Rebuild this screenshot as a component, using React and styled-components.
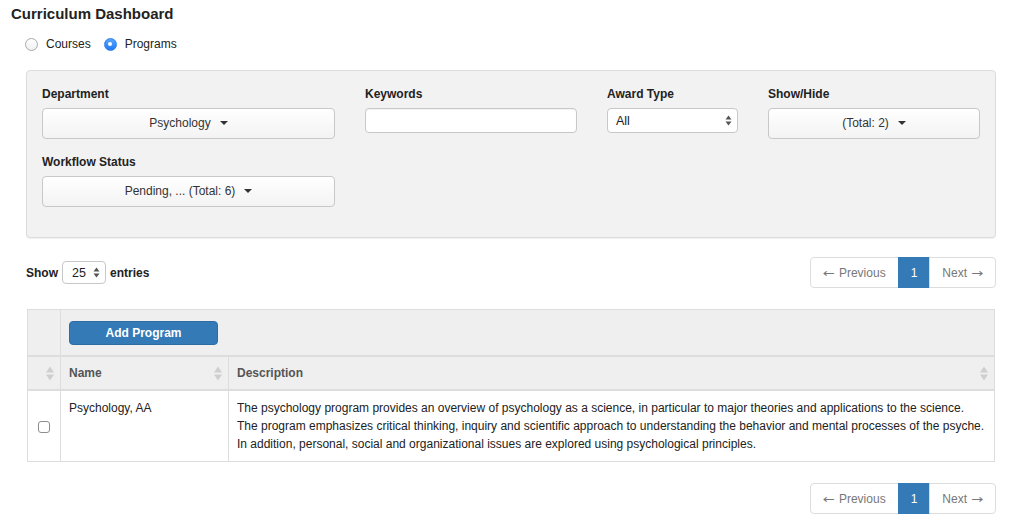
import React from "react";
import styled, { createGlobalStyle } from "styled-components";

const GlobalStyle = createGlobalStyle`
  body {
    margin: 0;
    background: #fff;
    font-family: "Liberation Sans", Arial, Helvetica, sans-serif;
    font-size: 12px;
    line-height: 18px;
    color: #333;
  }
  * { box-sizing: border-box; }
`;

const Page = styled.div`
  padding: 5px 20px 10px 26px;
`;

const Title = styled.h1`
  margin: 0 0 0 -15px;
  font-size: 15px;
  line-height: 18px;
  font-weight: bold;
  color: #222;
`;

//radio buttons for courses / programs
const RadioRow = styled.div`
  display: flex;
  align-items: center;
  margin: 12px 0 0 -1px;
  height: 18px;
`;

const RadioOption = styled.label`
  display: flex;
  align-items: center;
  gap: 8px;
  margin-right: 13px;
  color: #222;
`;

const RadioDot = styled.span`
  width: 13px;
  height: 13px;
  border-radius: 50%;
  display: flex;
  align-items: center;
  justify-content: center;
  border: 1px solid ${(p) => (p.checked ? "#2f7ff0" : "#a9a9a9")};
  background: ${(p) =>
    p.checked ? "linear-gradient(#58a6ff, #1f7af5)" : "linear-gradient(#fff, #f0f0f0)"};
  &::after {
    content: "";
    display: ${(p) => (p.checked ? "block" : "none")};
    width: 4px;
    height: 4px;
    border-radius: 50%;
    background: #fff;
  }
`;

//filters
const FilterPanel = styled.div`
  margin-top: 17px;
  background: #f2f2f2;
  border: 1px solid #dcdcdc;
  border-radius: 4px;
  box-shadow: 0 1px 1px rgba(0, 0, 0, 0.06);
  padding: 14px 15px 30px;
  display: grid;
  grid-template-columns: 293px 212px 131px 212px;
  column-gap: 30px;
  row-gap: 14px;
  align-items: start;
`;

const Field = styled.div`
  display: flex;
  flex-direction: column;
`;

const FieldLabel = styled.label`
  font-weight: bold;
  color: #222;
  margin-bottom: 5px;
`;

const DropButton = styled.button`
  height: 31px;
  width: 100%;
  border: 1px solid #c8c8c8;
  border-radius: 4px;
  background: linear-gradient(#ffffff, #f3f3f3);
  font: inherit;
  color: #333;
  display: flex;
  align-items: center;
  justify-content: center;
  gap: 9px;
  padding: 0 12px 1px;
`;

const Caret = styled.span`
  width: 0;
  height: 0;
  border-top: 4px solid #333;
  border-left: 4px solid transparent;
  border-right: 4px solid transparent;
`;

const TextInput = styled.input`
  height: 25px;
  width: 100%;
  border: 1px solid #c8c8c8;
  border-radius: 4px;
  background: #fff;
  font: inherit;
  padding: 0 8px;
  box-shadow: inset 0 1px 1px rgba(0, 0, 0, 0.05);
`;

const SelectBox = styled.div`
  height: ${(p) => p.h || 25}px;
  width: ${(p) => (p.w ? `${p.w}px` : "100%")};
  border: 1px solid #c8c8c8;
  border-radius: 4px;
  background: #fff;
  display: flex;
  align-items: center;
  padding: 0 5px 0 ${(p) => p.pl || 8}px;
  color: #222;
  font-size: 12.5px;
  font-weight: normal;
`;

const SelectArrows = styled.svg`
  margin-left: auto;
  flex: none;
`;

function Arrows() {
  return (
    <SelectArrows width="7" height="11" viewBox="0 0 7 11">
      <path d="M0.5 4.5 L3.5 0.5 L6.5 4.5 Z" fill="#555" />
      <path d="M0.5 6.5 L6.5 6.5 L3.5 10.5 Z" fill="#555" />
    </SelectArrows>
  );
}

//show entries + pagination
const ControlRow = styled.div`
  display: flex;
  align-items: center;
  justify-content: space-between;
  margin-top: 19px;
  height: 31px;
`;

const ShowEntries = styled.div`
  display: flex;
  align-items: center;
  gap: 4px;
  font-weight: bold;
  color: #222;
`;

const Pager = styled.ul`
  display: flex;
  list-style: none;
  margin: 0;
  padding: 0;
`;

const PageItem = styled.li`
  height: 31px;
  display: flex;
  align-items: center;
  gap: 4px;
  padding: 0 12px;
  border: 1px solid ${(p) => (p.active ? "#337ab7" : "#ddd")};
  margin-left: -1px;
  background: ${(p) => (p.active ? "#337ab7" : "#fff")};
  color: ${(p) => (p.active ? "#fff" : "#777")};
  &:first-child {
    margin-left: 0;
    border-radius: 4px 0 0 4px;
  }
  &:last-child {
    border-radius: 0 4px 4px 0;
  }
`;

const Arrow = styled.span`
  display: inline-block;
  width: 12px;
  text-align: center;
  font-family: "DejaVu Sans", sans-serif;
  font-size: 12px;
  transform: scaleX(1.2);
`;

function Pagination() {
  return (
    <Pager>
      <PageItem>
        <Arrow>←</Arrow>Previous
      </PageItem>
      <PageItem active>1</PageItem>
      <PageItem>
        Next<Arrow>→</Arrow>
      </PageItem>
    </Pager>
  );
}

const BottomPager = styled.div`
  display: flex;
  justify-content: flex-end;
  margin-top: 21px;
`;

//table
const Table = styled.table`
  margin: 21px 1px 0;
  width: calc(100% - 2px);
  border-collapse: collapse;
  border: 1px solid #ddd;
`;

const Col = styled.col`
  width: ${(p) => (p.w ? `${p.w}px` : "auto")};
`;

const ToolCell = styled.th`
  background: #efefef;
  border: 1px solid #ddd;
  border-bottom: 2px solid #ddd;
  padding: 11px 8px 10px;
  text-align: left;
`;

const AddButton = styled.button`
  width: 149px;
  height: 24px;
  background: #337ab7;
  border: 1px solid #2e6da4;
  border-radius: 4px;
  color: #fff;
  font: inherit;
  padding: 0;
`;

const HeadCell = styled.th`
  background: #efefef;
  border: 1px solid #ddd;
  border-bottom: 2px solid #ddd;
  padding: 7px 6px 7px 8px;
  text-align: left;
  font-weight: bold;
  color: #555;
`;

const HeadInner = styled.div`
  display: flex;
  align-items: center;
  justify-content: space-between;
  height: 18px;
`;

function SortIcon() {
  return (
    <svg width="8" height="15" viewBox="0 0 8 15">
      <path d="M0 6.5 L4 0.5 L8 6.5 Z" fill="#cfcfcf" />
      <path d="M0 8.5 L8 8.5 L4 14.5 Z" fill="#cfcfcf" />
    </svg>
  );
}

const Cell = styled.td`
  border: 1px solid #ddd;
  padding: 8px;
  vertical-align: top;
  color: #222;
`;

const CheckCell = styled(Cell)`
  vertical-align: middle;
  text-align: center;
  padding: 0;
`;

const CheckBox = styled.span`
  display: inline-block;
  width: 12px;
  height: 12px;
  border: 1px solid #8e8e8e;
  border-radius: 3px;
  background: #fff;
  vertical-align: middle;
`;

const DescLine = styled.span`
  display: block;
  white-space: nowrap;
`;

const description = [
  "The psychology program provides an overview of psychology as a science, in particular to major theories and applications to the science.",
  "The program emphasizes critical thinking, inquiry and scientific approach to understanding the behavior and mental processes of the psyche.",
  "In addition, personal, social and organizational issues are explored using psychological principles.",
];

export default function App() {
  return (
    <Page>
      <GlobalStyle />
      <Title>Curriculum Dashboard</Title>
      <RadioRow>
        <RadioOption>
          <RadioDot />
          Courses
        </RadioOption>
        <RadioOption>
          <RadioDot checked />
          Programs
        </RadioOption>
      </RadioRow>

      <FilterPanel>
        <Field>
          <FieldLabel>Department</FieldLabel>
          <DropButton>
            Psychology <Caret />
          </DropButton>
        </Field>
        <Field>
          <FieldLabel>Keywords</FieldLabel>
          <TextInput type="text" />
        </Field>
        <Field>
          <FieldLabel>Award Type</FieldLabel>
          <SelectBox>
            All
            <Arrows />
          </SelectBox>
        </Field>
        <Field>
          <FieldLabel>Show/Hide</FieldLabel>
          <DropButton>
            (Total: 2) <Caret />
          </DropButton>
        </Field>
        <Field>
          <FieldLabel>Workflow Status</FieldLabel>
          <DropButton>
            Pending, ... (Total: 6) <Caret />
          </DropButton>
        </Field>
      </FilterPanel>

      <ControlRow>
        <ShowEntries>
          Show
          <SelectBox w={44} h={23} pl={9}>
            25
            <Arrows />
          </SelectBox>
          entries
        </ShowEntries>
        <Pagination />
      </ControlRow>

      <Table>
        <colgroup>
          <Col w={33} />
          <Col w={168} />
          <Col />
        </colgroup>
        <thead>
          <tr>
            <ToolCell />
            <ToolCell colSpan={2}>
              <AddButton>Add Program</AddButton>
            </ToolCell>
          </tr>
          <tr>
            <HeadCell>
              <HeadInner>
                <span />
                <SortIcon />
              </HeadInner>
            </HeadCell>
            <HeadCell>
              <HeadInner>
                Name
                <SortIcon />
              </HeadInner>
            </HeadCell>
            <HeadCell>
              <HeadInner>
                Description
                <SortIcon />
              </HeadInner>
            </HeadCell>
          </tr>
        </thead>
        <tbody>
          <tr>
            <CheckCell>
              <CheckBox />
            </CheckCell>
            <Cell>Psychology, AA</Cell>
            <Cell>
              {description.map((line) => (
                <DescLine key={line}>{line}</DescLine>
              ))}
            </Cell>
          </tr>
        </tbody>
      </Table>

      <BottomPager>
        <Pagination />
      </BottomPager>
    </Page>
  );
}
